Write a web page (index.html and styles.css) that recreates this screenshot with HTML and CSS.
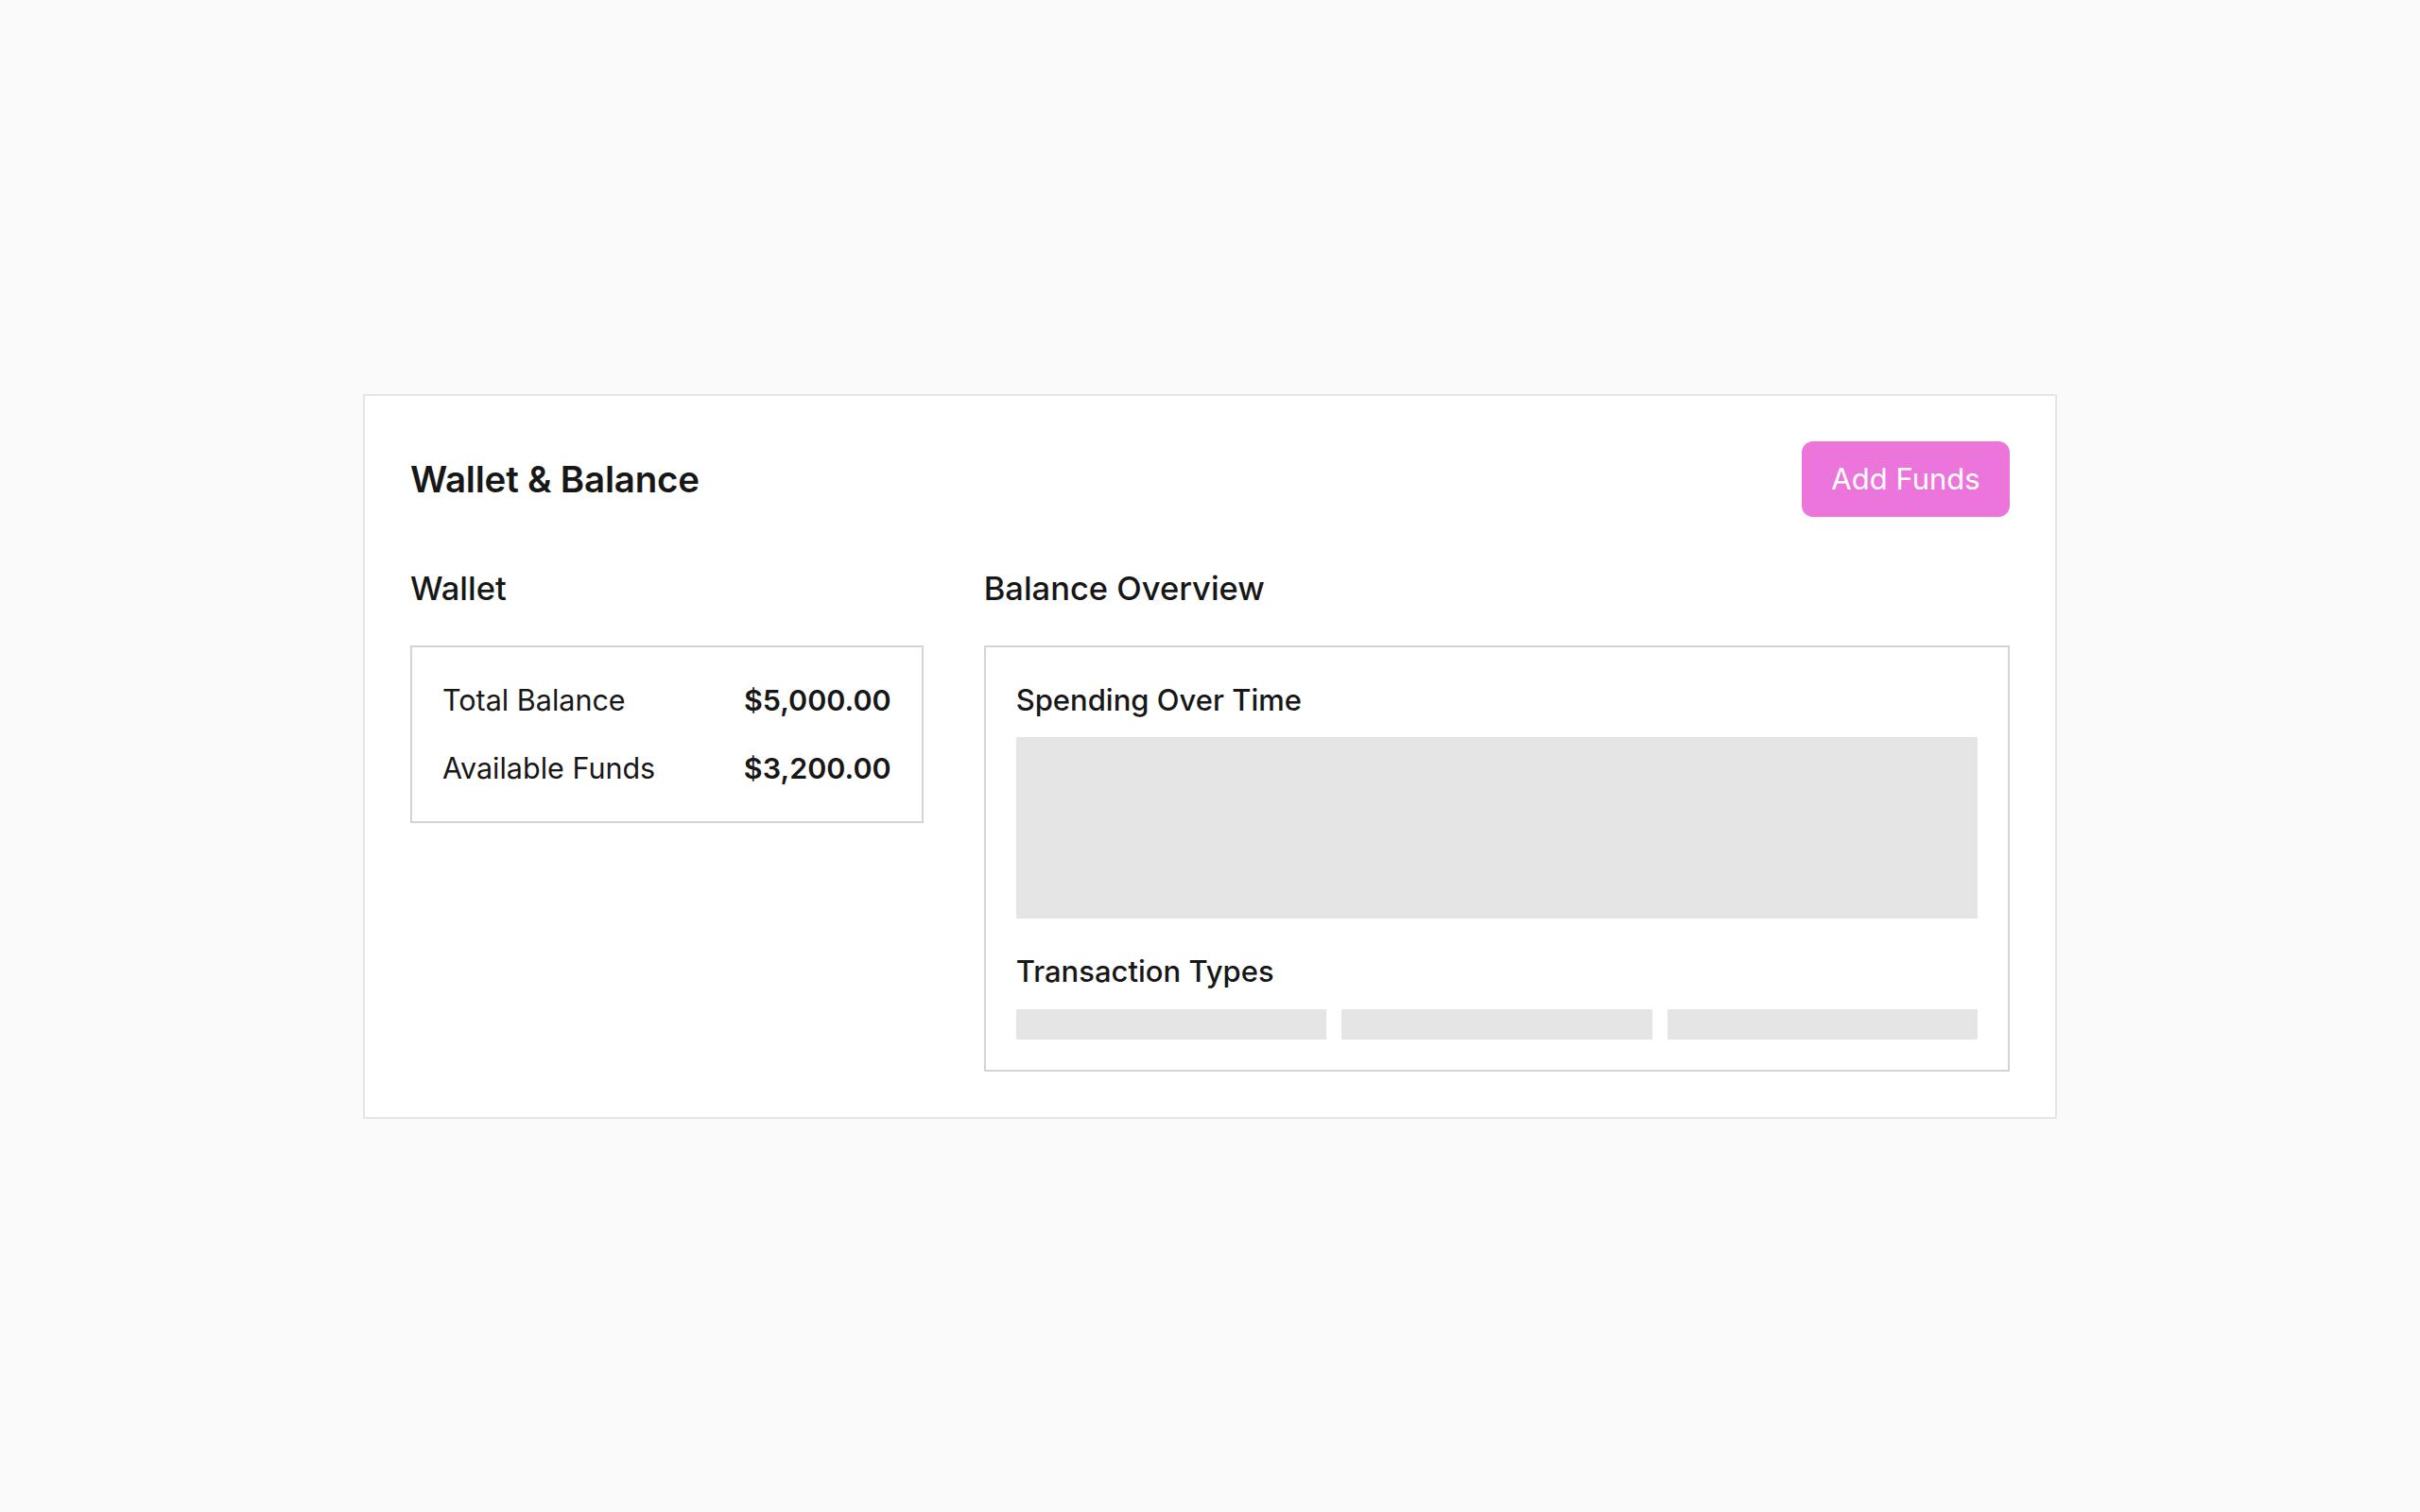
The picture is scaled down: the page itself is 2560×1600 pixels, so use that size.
FILE: index.html
```html
<!DOCTYPE html>
<html lang="en">
<head>
    <meta charset="UTF-8">
    <meta name="viewport" content="width=device-width, initial-scale=1.0">
    <title>Wallet &amp; Balance</title>
    <link rel="stylesheet" href="styles.css">
</head>

<body>
<div class="wallet-card">
    <div class="wallet-card__header">
        <h1 class="wallet-card__title">Wallet &amp; Balance</h1>
        <button class="btn btn--pink">Add Funds</button>
    </div>

    <div class="wallet-card__grid">
        <section class="panel">
            <h2 class="panel__title">Wallet</h2>
            <div class="panel__box wallet-box">
                <div class="wallet-box__row">
                    <span>Total Balance</span>
                    <span class="wallet-box__amount">$5,000.00</span>
                </div>
                <div class="wallet-box__row">
                    <span>Available Funds</span>
                    <span class="wallet-box__amount">$3,200.00</span>
                </div>
            </div>
        </section>

        <section class="panel">
            <h2 class="panel__title">Balance Overview</h2>
            <div class="panel__box overview">
                <h3 class="overview__label">Spending Over Time</h3>
                <div class="overview__chart"></div>

                <h3 class="overview__label overview__label--spaced">Transaction Types</h3>
                <div class="overview__bars">
                    <div class="overview__bar"></div>
                    <div class="overview__bar"></div>
                    <div class="overview__bar"></div>
                </div>
            </div>
        </section>
    </div>
</div>
</body>
</html>
```

FILE: styles.css
```css
html {
    box-sizing: border-box;
}

*,
*::before,
*::after {
    box-sizing: inherit;
}

body {
    margin: 0;
    font-family: Inter, "Liberation Sans", sans-serif;
    color: #171717;
    background-color: #fafafa;
    display: flex;
    align-items: center;
    justify-content: center;
    min-height: 100vh;
}

h1,
h2,
h3 {
    margin: 0;
}

.wallet-card {
    width: 1792px;
    background-color: #fff;
    border: 2px solid #e5e5e5;
    padding: 48px;
}

.wallet-card__header {
    display: flex;
    align-items: center;
    justify-content: space-between;
    height: 80px;
    margin-bottom: 48px;
}

.wallet-card__title {
    font-size: 38.5px;
    font-weight: 600;
    letter-spacing: -0.2px;
}

.btn {
    border: none;
    font-family: inherit;
    cursor: pointer;
}

.btn--pink {
    width: 220px;
    height: 80px;
    border-radius: 12px;
    background-color: #ec75dc;
    color: #fff;
    font-size: 31px;
}

.wallet-card__grid {
    display: grid;
    grid-template-columns: 1fr 2fr;
    gap: 64px;
    align-items: start;
}

.panel__title {
    font-size: 34.5px;
    font-weight: 450;
    line-height: 56px;
    margin-bottom: 32px;
}

.panel__box {
    border: 2px solid #d4d4d4;
    padding: 32px;
}

.wallet-box {
    display: flex;
    flex-direction: column;
    gap: 24px;
    font-size: 30.5px;
    line-height: 48px;
}

.wallet-box__row {
    display: flex;
    justify-content: space-between;
}

.wallet-box__amount {
    font-weight: 600;
}

.overview__label {
    font-size: 31px;
    font-weight: 450;
    line-height: 48px;
}

.overview__label--spaced {
    margin-top: 32px;
}

.overview__chart {
    height: 192px;
    margin-top: 15px;
    background-color: #e5e5e5;
}

.overview__bars {
    display: grid;
    grid-template-columns: repeat(3, 1fr);
    gap: 16px;
    margin-top: 16px;
}

.overview__bar {
    height: 32px;
    background-color: #e5e5e5;
}
```
